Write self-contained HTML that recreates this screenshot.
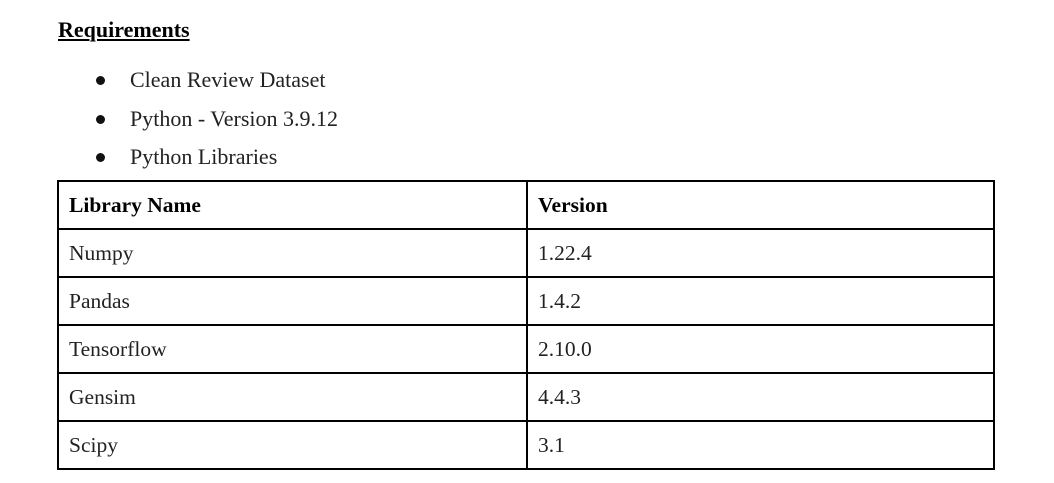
<!DOCTYPE html>
<html><head><style>
body{margin:0;width:1054px;height:483px;background:#fff;font-family:"Liberation Serif",serif;color:#222;position:relative;overflow:hidden}
.t{position:absolute;font-size:22px;line-height:26px;white-space:nowrap}
.b{position:absolute;width:9px;height:9px;border-radius:50%;background:#111;left:96px}
table{position:absolute;left:57px;top:180px;border-collapse:collapse;width:938px}
td{border:2px solid #000;height:46px;box-sizing:border-box;padding:0 0 0 10px;font-size:21.5px;vertical-align:middle}
td:first-child{width:469px}
th{border:2px solid #000;height:46px;padding:0 0 0 10px;font-size:21.5px;text-align:left;color:#000}
tr{height:48px}
</style></head><body>
<div class="t" style="left:58px;top:17px;font-weight:bold;text-decoration:underline;color:#000">Requirements</div>
<div class="b" style="top:76px"></div><div class="t" style="left:130px;top:67px">Clean Review Dataset</div>
<div class="b" style="top:115px"></div><div class="t" style="left:130px;top:106px">Python - Version 3.9.12</div>
<div class="b" style="top:153px"></div><div class="t" style="left:130px;top:144px">Python Libraries</div>
<table>
<tr><th>Library Name</th><th>Version</th></tr>
<tr><td>Numpy</td><td>1.22.4</td></tr>
<tr><td>Pandas</td><td>1.4.2</td></tr>
<tr><td>Tensorflow</td><td>2.10.0</td></tr>
<tr><td>Gensim</td><td>4.4.3</td></tr>
<tr><td>Scipy</td><td>3.1</td></tr>
</table>
</body></html>
